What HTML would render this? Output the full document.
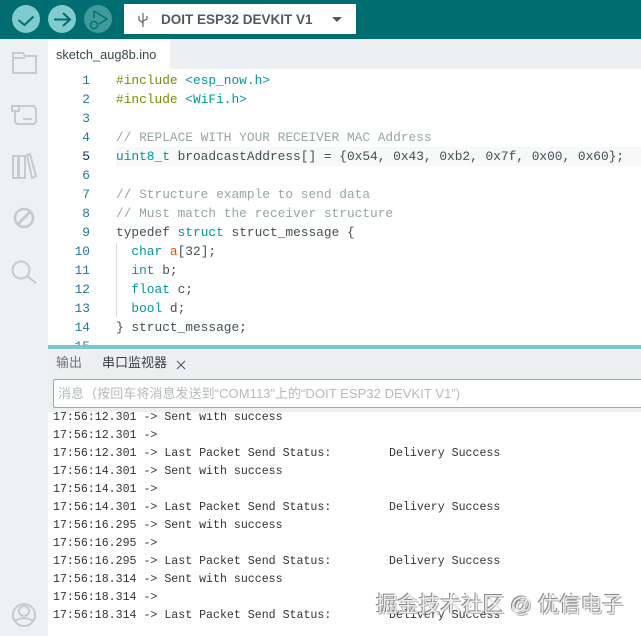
<!DOCTYPE html>
<html><head><meta charset="utf-8">
<style>
html,body{margin:0;padding:0;background:#fff}
#p{position:relative;width:641px;height:636px;overflow:hidden;background:#fff;font-family:"Liberation Sans","Noto Sans CJK SC",sans-serif}
.a{position:absolute}
.c,.n,.m{position:absolute;white-space:pre;font-family:"Liberation Mono",monospace}
.c{left:116px;font-size:12.83px;line-height:19px;color:#434f54}
.n{width:42px;left:48px;text-align:right;font-size:12.83px;line-height:19px;color:#237893}
.m{left:53px;font-size:11.6px;line-height:18px;color:#333}
.k{color:#00979d}.p{color:#728e00}.g{color:#95a5a6}.o{color:#d35400}
</style></head><body><div id="p">
<div class="a" style="left:0;top:0;width:641px;height:39px;background:#006d70"></div>
<div class="a" style="left:48px;top:39px;width:593px;height:30px;background:#ecf0f1"></div>
<div class="a" style="left:0;top:39px;width:48px;height:597px;background:#ecf1f1"></div>
<div class="a" style="left:48px;top:39px;width:122px;height:30px;background:#fff"></div>
<div class="a" style="left:56px;top:46px;font-size:12.8px;line-height:17px;color:#37474a">sketch_aug8b.ino</div>

<svg class="a" style="left:0;top:0" width="120" height="39" viewBox="0 0 120 39">
<circle cx="26" cy="19" r="14" fill="#7fcbcd"/><circle cx="62" cy="19" r="14" fill="#7fcbcd"/><circle cx="98" cy="19" r="14" fill="#3f9a9c"/>
<path d="M18.500 20l6 5 9-8.500" fill="none" stroke="#006d70" stroke-width="2"/>
<path d="M54 19.500h15M63 13l7 6.500-7 6.500" fill="none" stroke="#006d70" stroke-width="2"/>
<path d="M94 11l13 8-8 5M94 11v7" fill="none" stroke="#006d70" stroke-width="1.4"/>
<circle cx="94" cy="25" r="3.600" fill="none" stroke="#006d70" stroke-width="1.4"/>
</svg>
<div class="a" style="left:124px;top:4px;width:232px;height:30px;background:#fff"></div>
<svg class="a" style="left:137px;top:12px" width="12" height="16" viewBox="0 0 12 16"><path d="M6 1v14M2 4v4l4 3M10 4v3L6 9" fill="none" stroke="#4e5b61" stroke-width="1.1"/></svg>
<div class="a" style="left:161px;top:11px;font-size:13.5px;line-height:17px;font-weight:bold;color:#4e5b61;white-space:pre">DOIT ESP32 DEVKIT V1</div>
<svg class="a" style="left:332px;top:17px" width="10" height="6"><path d="M0 0h10L5 5z" fill="#4e5b61"/></svg>

<svg class="a" style="left:0;top:39px" width="48" height="597" viewBox="0 39 48 597" fill="none" stroke="#c4cccc" stroke-width="2">
<path d="M13 53h10l2 3h11v17H13z"/><path d="M13 58h12"/>
<path d="M15 106h19l2 3v13l-2 2H17l-2-2v-7"/><rect x="12" y="106" width="7" height="5"/><path d="M15 111v4M23 119h9"/>
<path d="M13 156h5v22h-5zM19 156h6v22h-6zM27 155l3-1 6 22-4 2z"/>
<circle cx="24" cy="218" r="9" stroke-width="2.6"/><path d="M18 224l12-12" stroke-width="3"/>
<circle cx="21" cy="270" r="8.500"/><path d="M27 276l9 7" stroke-width="2.2"/>
<circle cx="24" cy="615" r="11"/><circle cx="24" cy="611" r="5"/><path d="M15 622c2-5 16-5 18 0"/>
</svg>

<div class="a" style="left:116px;top:147px;width:525px;height:19px;background:#f7f8f8"></div>
<div class="a" style="left:116px;top:243px;width:1px;height:74px;background:#d5dada"></div>
<div class="n" style="top:71px">1</div><div class="n" style="top:90px">2</div><div class="n" style="top:109px">3</div><div class="n" style="top:128px">4</div><div class="n" style="top:147px;color:#0b216f">5</div><div class="n" style="top:166px">6</div><div class="n" style="top:185px">7</div><div class="n" style="top:204px">8</div><div class="n" style="top:223px">9</div><div class="n" style="top:242px">10</div><div class="n" style="top:261px">11</div><div class="n" style="top:280px">12</div><div class="n" style="top:299px">13</div><div class="n" style="top:318px">14</div><div class="n" style="top:337px">15</div>
<div class="c" style="top:71px"><span class="p">#include</span> <span class="k">&lt;esp_now.h&gt;</span></div>
<div class="c" style="top:90px"><span class="p">#include</span> <span class="k">&lt;WiFi.h&gt;</span></div>
<div class="c g" style="top:128px">// REPLACE WITH YOUR RECEIVER MAC Address</div>
<div class="c" style="top:147px"><span class="k">uint8_t</span> broadcastAddress[] = {0x54, 0x43, 0xb2, 0x7f, 0x00, 0x60};</div>
<div class="c g" style="top:185px">// Structure example to send data</div>
<div class="c g" style="top:204px">// Must match the receiver structure</div>
<div class="c" style="top:223px">typedef <span class="k">struct</span> struct_message {</div>
<div class="c" style="top:242px">  <span class="k">char</span> <span class="o">a</span>[32];</div>
<div class="c" style="top:261px">  <span class="k">int</span> b;</div>
<div class="c" style="top:280px">  <span class="k">float</span> c;</div>
<div class="c" style="top:299px">  <span class="k">bool</span> d;</div>
<div class="c" style="top:318px">} struct_message;</div>

<div class="a" style="left:48px;top:345px;width:593px;height:4px;background:#7fc4c6"></div>
<div class="a" style="left:48px;top:349px;width:593px;height:63px;background:#ecf0f1"></div>
<div class="a" style="left:56px;top:354px;font-size:13px;line-height:18px;color:#6b7678">输出</div>
<div class="a" style="left:102px;top:354px;font-size:13px;line-height:18px;color:#374146">串口监视器</div>
<svg class="a" style="left:176px;top:360px" width="10" height="10"><path d="M1 1l8 8M9 1l-8 8" stroke="#4e5b61" stroke-width="1.1"/></svg>
<div class="a" style="left:53px;top:379px;width:600px;height:29px;box-sizing:border-box;border:1px solid #6fbfc1;border-radius:2px;background:#fff"></div>
<div class="a" style="left:58px;top:386px;font-size:13px;line-height:16px;color:#b4b9ba;white-space:pre;letter-spacing:.06px">消息（按回车将消息发送到“COM113”上的“DOIT ESP32 DEVKIT V1”)</div>

<div class="a" style="left:48px;top:412px;width:593px;height:224px;background:#fff;overflow:hidden">
<div class="a" style="left:0;top:-4px;width:593px;height:228px">
<div class="m" style="left:5px;top:1px">17:56:12.301 -&gt; Sent with success</div>
<div class="m" style="left:5px;top:19px">17:56:12.301 -&gt; </div>
<div class="m" style="left:5px;top:37px">17:56:12.301 -&gt; Last Packet Send Status:</div>
<div class="m" style="left:341px;top:37px">Delivery Success</div>
<div class="m" style="left:5px;top:55px">17:56:14.301 -&gt; Sent with success</div>
<div class="m" style="left:5px;top:73px">17:56:14.301 -&gt; </div>
<div class="m" style="left:5px;top:91px">17:56:14.301 -&gt; Last Packet Send Status:</div>
<div class="m" style="left:341px;top:91px">Delivery Success</div>
<div class="m" style="left:5px;top:109px">17:56:16.295 -&gt; Sent with success</div>
<div class="m" style="left:5px;top:127px">17:56:16.295 -&gt; </div>
<div class="m" style="left:5px;top:145px">17:56:16.295 -&gt; Last Packet Send Status:</div>
<div class="m" style="left:341px;top:145px">Delivery Success</div>
<div class="m" style="left:5px;top:163px">17:56:18.314 -&gt; Sent with success</div>
<div class="m" style="left:5px;top:181px">17:56:18.314 -&gt; </div>
<div class="m" style="left:5px;top:199px">17:56:18.314 -&gt; Last Packet Send Status:</div>
<div class="m" style="left:341px;top:199px">Delivery Success</div>
</div>
</div>
<div class="a" style="left:376px;top:593px;font-size:21.4px;line-height:24px;color:#ececec;white-space:pre;text-shadow:-1px -1px 0 #888,1px 1px 0 #b5b5b5">掘金技术社区 @ 优信电子</div>
</div></body></html>
